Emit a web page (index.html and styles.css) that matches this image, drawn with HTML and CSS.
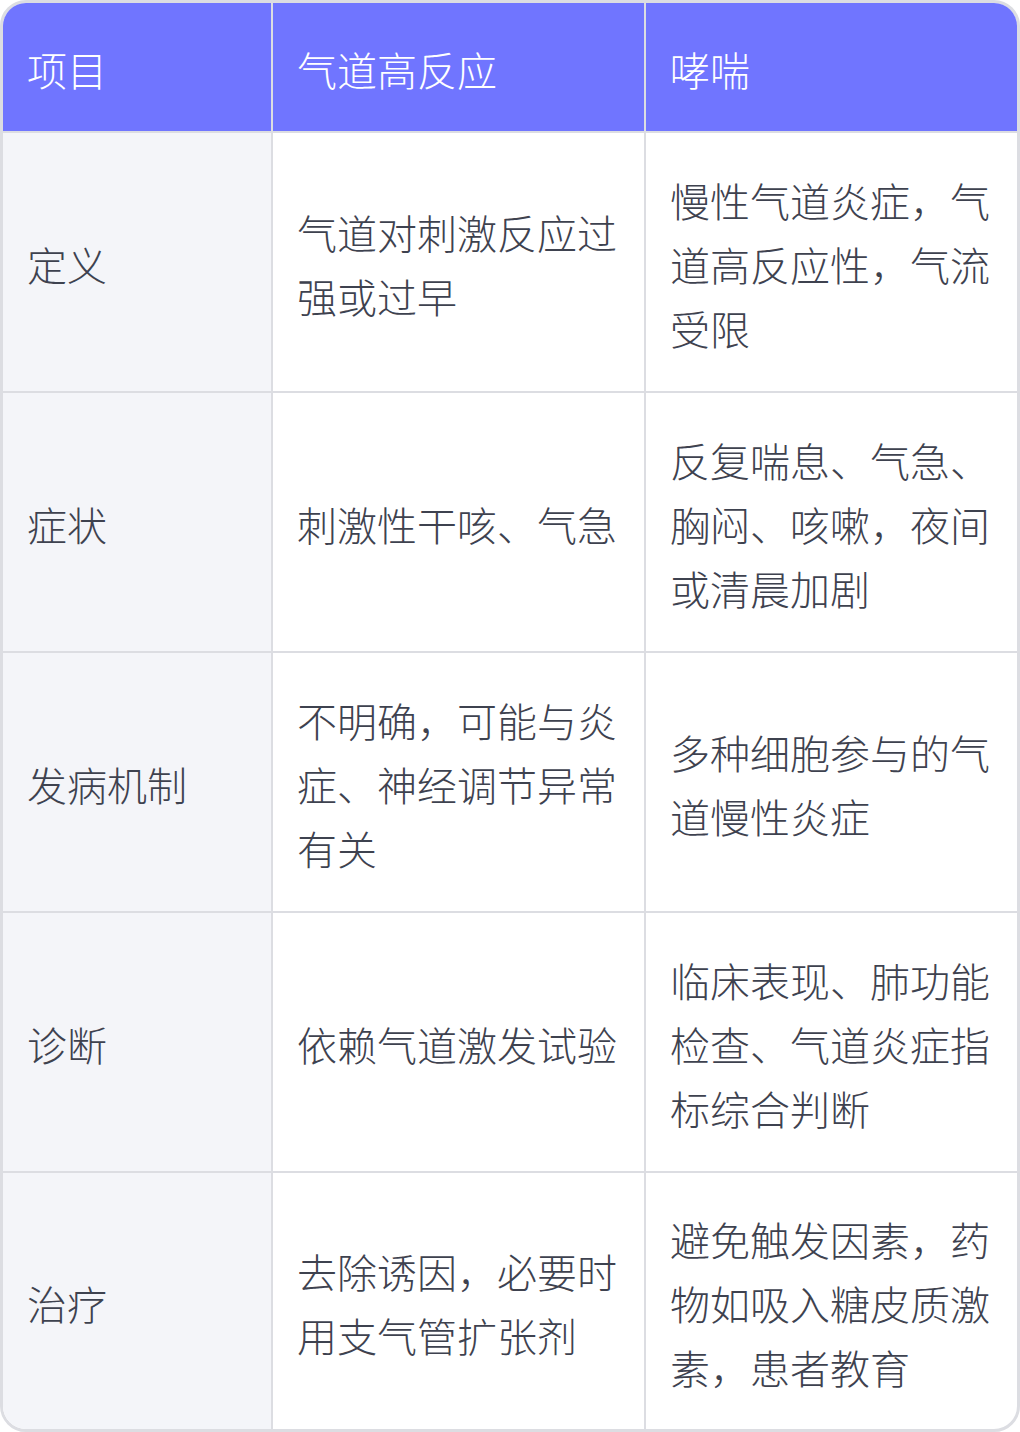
FILE: index.html
```html
<!DOCTYPE html>
<html lang="zh-CN">
<head>
<meta charset="utf-8">
<title>气道高反应与哮喘</title>
<link rel="stylesheet" href="styles.css">
</head>
<body>
<div class="wrap">
  <table class="cmp">
    <colgroup>
      <col class="c1"><col class="c2"><col class="c3">
    </colgroup>
    <thead>
      <tr><th>项目</th><th>气道高反应</th><th>哮喘</th></tr>
    </thead>
    <tbody>
      <tr><td>定义</td><td>气道对刺激反应过强或过早</td><td>慢性气道炎症，气道高反应性，气流受限</td></tr>
      <tr><td>症状</td><td>刺激性干咳、气急</td><td>反复喘息、气急、胸闷、咳嗽，夜间或清晨加剧</td></tr>
      <tr><td>发病机制</td><td>不明确，可能与炎症、神经调节异常有关</td><td>多种细胞参与的气道慢性炎症</td></tr>
      <tr><td>诊断</td><td>依赖气道激发试验</td><td>临床表现、肺功能检查、气道炎症指标综合判断</td></tr>
      <tr><td>治疗</td><td>去除诱因，必要时用支气管扩张剂</td><td>避免触发因素，药物如吸入糖皮质激素，患者教育</td></tr>
    </tbody>
  </table>
</div>
</body>
</html>
```

FILE: styles.css
```css
html, body {
  margin: 0;
  padding: 0;
  background: #ffffff;
}
.wrap {
  width: 1020px;
  box-sizing: border-box;
  border: 3px solid #dcdde2;
  border-radius: 26px;
  overflow: hidden;
  background: #ffffff;
}
.cmp {
  width: 100%;
  border-collapse: separate;
  border-spacing: 0;
  table-layout: fixed;
  font-family: "Noto Sans CJK SC", "Noto Sans", sans-serif;
  font-weight: 300;
  font-size: 40px;
  line-height: 64px;
  color: #3e424f;
}
.c1 { width: 270px; }
.c2 { width: 373px; }
.c3 { width: 371px; }
.cmp th,
.cmp td {
  text-align: left;
  vertical-align: middle;
  border-right: 2px solid #dcdde2;
  border-bottom: 2px solid #dcdde2;
  padding: 35px 24px 31px 24px;
  word-break: break-all;
}
.cmp th:last-child,
.cmp td:last-child {
  border-right: none;
}
.cmp tbody tr:last-child td {
  border-bottom: none;
  padding-top: 34px;
  padding-bottom: 30px;
}
.cmp th {
  background: #7075ff;
  color: #ffffff;
  font-weight: 300;
  padding: 34px 24px 30px 24px;
}
.cmp td:first-child {
  background: #f4f5f9;
}
```
